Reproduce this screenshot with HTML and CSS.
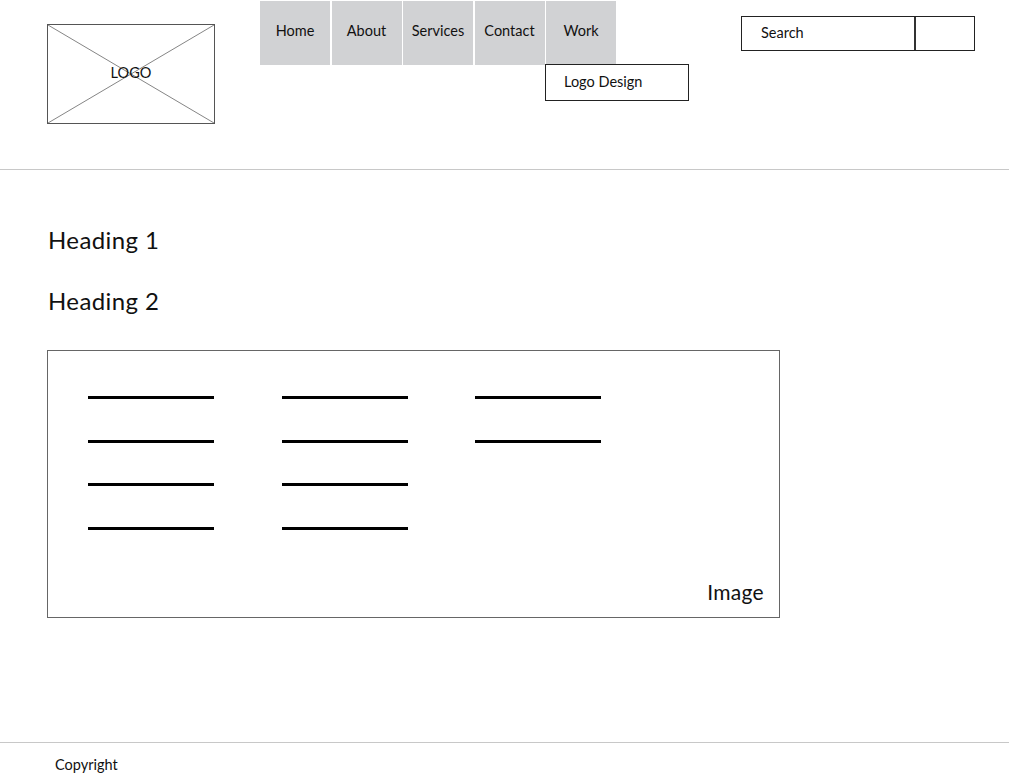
FILE: index.html
```html
<!DOCTYPE html>
<html lang="en">
<head>
    <meta charset="UTF-8">
    <meta name="viewport" content="width=device-width, initial-scale=1.0">
    <title>Wireframe</title>
    <link rel="stylesheet" href="styles.css">
</head>
<body>

    <header class="site-header">
        <div class="logo">
            <svg class="logo-cross" viewBox="0 0 166 98" preserveAspectRatio="none">
                <line x1="0" y1="0" x2="166" y2="98" />
                <line x1="0" y1="98" x2="166" y2="0" />
            </svg>
            <span class="logo-text">LOGO</span>
        </div>

        <nav class="main-nav">
            <a class="nav-item" href="#">Home</a>
            <a class="nav-item" href="#">About</a>
            <a class="nav-item" href="#">Services</a>
            <a class="nav-item" href="#">Contact</a>
            <div class="nav-item has-menu">
                Work
                <div class="dropdown">Logo Design</div>
            </div>
        </nav>

        <div class="search">
            <div class="search-field">Search</div>
            <div class="search-button"></div>
        </div>
    </header>

    <main class="content">
        <h1>Heading 1</h1>
        <h2>Heading 2</h2>

        <div class="image-box">
            <div class="text-lines">
                <span></span><span></span><span></span><span></span>
                <span></span><span></span><span></span><span></span>
                <span></span><span></span>
            </div>
            <div class="image-label">Image</div>
        </div>
    </main>

    <footer class="site-footer">
        Copyright
    </footer>

</body>
</html>
```

FILE: styles.css
```css
body {
    margin: 0;
    font-family: Lato, "Noto Sans", sans-serif;
    color: #111;
    background: #fff;
}

/* header */
.site-header {
    height: 169px;
    display: flex;
    align-items: flex-start;
    padding-left: 47px;
    padding-right: 34px;
    border-bottom: 1px solid #c8c8c8;
}

.logo {
    position: relative;
    width: 166px;
    height: 98px;
    margin-top: 24px;
    border: 1px solid #555;
    display: flex;
    justify-content: center;
    align-items: center;
}

.logo-cross {
    position: absolute;
    top: 0;
    left: 0;
    width: 100%;
    height: 100%;
}

.logo-cross line {
    stroke: #666;
    stroke-width: 0.8;
}

.logo-text {
    position: relative;
    font-size: 14.5px;
    margin-top: -3px;
}

.main-nav {
    display: flex;
    gap: 1.5px;
    margin-left: 45px;
    margin-top: 1px;
}

.nav-item {
    position: relative;
    width: 70px;
    height: 64px;
    background-color: #d1d2d4;
    color: #111;
    text-decoration: none;
    font-size: 14.5px;
    display: flex;
    justify-content: center;
    padding-top: 21px;
    box-sizing: border-box;
}

.dropdown {
    position: absolute;
    top: 63px;
    left: -1px;
    width: 124px;
    height: 35px;
    border: 1px solid #222;
    background: #fff;
    font-size: 14.5px;
    padding-left: 18px;
    line-height: 34px;
}

.search {
    display: flex;
    margin-left: auto;
    margin-top: 16px;
    height: 35px;
    border: 1px solid #222;
    box-sizing: border-box;
}

.search-field {
    width: 153px;
    padding-left: 19px;
    font-size: 14.5px;
    line-height: 31px;
    border-right: 2px solid #333;
}

.search-button {
    width: 58px;
}

/* content */
.content {
    height: 572px;
    padding: 0 48px;
}

h1, h2 {
    font-weight: normal;
    font-size: 24px;
    letter-spacing: 0.4px;
    margin: 0;
}

h1 {
    padding-top: 55px;
}

h2 {
    margin-top: 32px;
}

.image-box {
    width: 733px;
    height: 268px;
    margin-top: 35px;
    margin-left: -1px;
    border: 1px solid #666;
    display: flex;
    flex-direction: column;
    padding: 45px 15px 13px 40px;
    box-sizing: border-box;
}

.text-lines {
    display: grid;
    grid-auto-flow: column;
    grid-template-rows: repeat(4, 3px);
    grid-template-columns: repeat(3, 126px);
    column-gap: 67.5px;
    row-gap: 40.5px;
}

.text-lines span {
    background: #000;
}

.image-label {
    margin-top: auto;
    align-self: flex-end;
    font-size: 21px;
    letter-spacing: 0.3px;
}

/* footer */
.site-footer {
    border-top: 1px solid #c8c8c8;
    padding: 13px 55px 0;
    font-size: 14.5px;
}
```
